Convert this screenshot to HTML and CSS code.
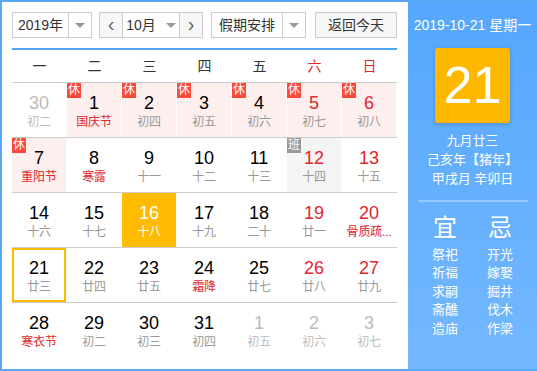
FILE: index.html
```html
<!DOCTYPE html>
<html lang="zh-CN">
<head>
  <meta charset="UTF-8">
  <title>万年历</title>
  <link rel="stylesheet" href="styles.css">
</head>
<body>

<div class="calendar">
  <div class="main">
    <div class="toolbar">
      <div class="select select-year">
        <span class="select-text">2019年</span>
        <span class="select-arrow"><i class="caret"></i></span>
      </div>
      <div class="select select-month">
        <span class="nav-btn">&lsaquo;</span>
        <span class="month-text">10月 <i class="caret"></i></span>
        <span class="nav-btn">&rsaquo;</span>
      </div>
      <div class="select select-holiday">
        <span class="select-text">假期安排</span>
        <span class="select-arrow"><i class="caret"></i></span>
      </div>
      <div class="today-btn">返回今天</div>
    </div>

    <div class="weekdays">
      <span>一</span><span>二</span><span>三</span><span>四</span><span>五</span>
      <span class="weekend">六</span><span class="weekend">日</span>
    </div>

    <div class="days" id="days"></div>
  </div>

  <div class="side">
    <div class="side-date">2019-10-21 星期一</div>
    <div class="side-day">21</div>
    <div class="side-lunar">
      <p>九月廿三</p>
      <p>己亥年【猪年】</p>
      <p>甲戌月 辛卯日</p>
    </div>
    <div class="side-line"></div>
    <div class="almanac">
      <div class="almanac-col">
        <div class="almanac-title">宜</div>
        <p>祭祀</p><p>祈福</p><p>求嗣</p><p>斋醮</p><p>造庙</p>
      </div>
      <div class="almanac-col">
        <div class="almanac-title">忌</div>
        <p>开光</p><p>嫁娶</p><p>掘井</p><p>伐木</p><p>作梁</p>
      </div>
    </div>
  </div>
</div>

<script>
  // day, lunar text, flags: o = other month, w = weekend, f = festival,
  // h = holiday (休), b = work day (班), t = today, s = selected
  const days = [
    [30, '初二', 'o'], [1, '国庆节', 'fh'], [2, '初四', 'h'], [3, '初五', 'h'], [4, '初六', 'h'], [5, '初七', 'wh'], [6, '初八', 'wh'],
    [7, '重阳节', 'fh'], [8, '寒露', 'f'], [9, '十一', ''], [10, '十二', ''], [11, '十三', ''], [12, '十四', 'wb'], [13, '十五', 'w'],
    [14, '十六', ''], [15, '十七', ''], [16, '十八', 't'], [17, '十九', ''], [18, '二十', ''], [19, '廿一', 'w'], [20, '骨质疏...', 'wf'],
    [21, '廿三', 's'], [22, '廿四', ''], [23, '廿五', ''], [24, '霜降', 'f'], [25, '廿七', ''], [26, '廿八', 'w'], [27, '廿九', 'w'],
    [28, '寒衣节', 'f'], [29, '初二', ''], [30, '初三', ''], [31, '初四', ''], [1, '初五', 'o'], [2, '初六', 'o'], [3, '初七', 'o']
  ];

  const container = document.getElementById('days');
  let row;
  days.forEach(function (d, i) {
    if (i % 7 === 0) {
      row = document.createElement('div');
      row.className = 'week';
      container.appendChild(row);
    }
    const flags = d[2];
    const cell = document.createElement('div');
    let cls = 'day';
    if (flags.includes('o')) cls += ' other';
    if (flags.includes('w')) cls += ' weekend';
    if (flags.includes('f')) cls += ' festival';
    if (flags.includes('h')) cls += ' holiday';
    if (flags.includes('b')) cls += ' workday';
    if (flags.includes('t')) cls += ' today';
    if (flags.includes('s')) cls += ' selected';
    cell.className = cls;

    let html = '';
    if (flags.includes('h')) html += '<span class="badge">休</span>';
    if (flags.includes('b')) html += '<span class="badge badge-work">班</span>';
    html += '<div class="num">' + d[0] + '</div><div class="lunar">' + d[1] + '</div>';
    cell.innerHTML = html;
    row.appendChild(cell);
  });
</script>

</body>
</html>
```

FILE: styles.css
```css
body {
  margin: 0;
  font-family: "Liberation Sans", Arial, "Noto Sans CJK SC", sans-serif;
  color: #333;
}
p {
  margin: 0;
}
.calendar {
  display: flex;
  width: 537px;
  height: 371px;
  box-sizing: border-box;
  border: 2px solid #5aa9f8;
  border-right: 0;
  background: #fff;
}
.main {
  width: 406px;
  padding: 10px 11px 0 10px;
  box-sizing: border-box;
}

/* toolbar */
.toolbar {
  display: flex;
  height: 26px;
  padding-bottom: 10px;
  border-bottom: 2px solid #4ea4f7;
}
.select {
  display: flex;
  height: 26px;
  box-sizing: border-box;
  border: 1px solid #ccc;
  font-size: 14px;
  line-height: 24px;
  color: #333;
}
.select-year {
  width: 80px;
}
.select-year .select-text {
  width: 55px;
  text-align: center;
}
.select-arrow {
  flex: 1;
  border-left: 1px solid #ccc;
  text-align: center;
}
.caret {
  display: inline-block;
  width: 0;
  height: 0;
  border-left: 5px solid transparent;
  border-right: 5px solid transparent;
  border-top: 5px solid #999;
  vertical-align: middle;
  margin-top: -2px;
}
.select-month {
  width: 104px;
  margin-left: 7px;
}
.nav-btn {
  width: 22px;
  background: #f7f7f7;
  text-align: center;
  font-size: 20px;
  line-height: 22px;
  color: #666;
}
.nav-btn:first-child {
  border-right: 1px solid #ccc;
}
.nav-btn:last-child {
  border-left: 1px solid #ccc;
}
.month-text {
  flex: 1;
  text-align: center;
}
.month-text .caret {
  margin-left: 6px;
}
.select-holiday {
  width: 95px;
  margin-left: 8px;
}
.select-holiday .select-text {
  width: 70px;
  text-align: center;
}
.today-btn {
  width: 82px;
  height: 26px;
  margin-left: auto;
  box-sizing: border-box;
  border: 1px solid #ccc;
  background: #f7f7f7;
  font-size: 14px;
  line-height: 24px;
  text-align: center;
  color: #333;
}

/* weekday header */
.weekdays {
  display: grid;
  grid-template-columns: repeat(7, 55px);
  height: 32px;
  line-height: 32px;
  font-size: 14px;
  text-align: center;
  color: #333;
}
.weekdays .weekend {
  color: #e0262d;
}

/* day grid */
.week {
  display: flex;
  height: 54px;
  border-top: 1px solid #ccc;
}
.day {
  position: relative;
  width: 54px;
  height: 54px;
  margin-right: 1px;
  box-sizing: border-box;
  padding: 10px 0 0;
  text-align: center;
}
.num {
  font-size: 18px;
  line-height: 20px;
  color: #000;
}
.lunar {
  font-size: 12px;
  line-height: 18px;
  color: #999;
  white-space: nowrap;
  letter-spacing: -0.2px;
}
.day.weekend .num {
  color: #e0262d;
}
.day.festival .lunar {
  color: #e0262d;
}
.day.other .num,
.day.other .lunar {
  color: #bbb;
}
.day.holiday {
  background: #feefef;
}
.day.workday {
  background: #f4f4f4;
}
.day.today {
  background: #ffbb00;
}
.day.today .num,
.day.today .lunar {
  color: #fff;
}
.day.selected {
  box-shadow: inset 0 0 0 2px #ffbb00;
}
.badge {
  position: absolute;
  top: 0;
  left: 0;
  width: 14px;
  height: 15px;
  background: #f94a3c;
  color: #fff;
  font-size: 12px;
  line-height: 15px;
  text-align: center;
}
.badge-work {
  background: #9a9a9a;
}

/* side panel */
.side {
  flex: 1;
  display: flex;
  flex-direction: column;
  align-items: center;
  background: linear-gradient(#55a7fd, #74b8fe);
  color: #fff;
}
.side-date {
  margin-top: 13px;
  font-size: 14px;
  line-height: 20px;
}
.side-day {
  width: 75px;
  height: 75px;
  margin-top: 13px;
  border-radius: 3px;
  background: #ffb800;
  box-shadow: 0 1px 4px rgba(0, 0, 0, 0.2);
  font-size: 52px;
  line-height: 75px;
  text-align: center;
}
.side-lunar {
  margin-top: 8px;
  font-size: 13px;
  line-height: 19px;
  text-align: center;
}
.side-line {
  width: 110px;
  height: 2px;
  margin-top: 12px;
  background: rgba(255, 255, 255, 0.3);
}
.almanac {
  display: flex;
  width: 110px;
  margin-top: 11px;
}
.almanac-col {
  flex: 1;
  text-align: center;
  font-size: 13px;
  line-height: 18.4px;
}
.almanac-title {
  font-size: 24px;
  line-height: 30px;
  margin-bottom: 3px;
}
```
